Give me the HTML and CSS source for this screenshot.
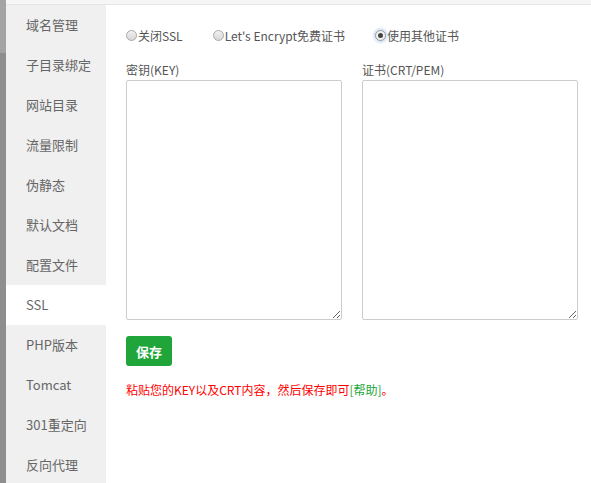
FILE: index.html
```html
<!DOCTYPE html>
<html>
<head>
<meta charset="utf-8">
<link rel="stylesheet" href="styles.css">
</head>
<body>
<div class="page">
  <div class="edge"></div>
  <div class="main">
    <div class="topbar"></div>
    <div class="body">
      <ul class="nav">
        <li>域名管理</li>
        <li>子目录绑定</li>
        <li>网站目录</li>
        <li>流量限制</li>
        <li>伪静态</li>
        <li>默认文档</li>
        <li>配置文件</li>
        <li class="active">SSL</li>
        <li>PHP版本</li>
        <li>Tomcat</li>
        <li>301重定向</li>
        <li>反向代理</li>
      </ul>
      <div class="content">
        <div class="radios">
          <label class="opt"><span class="radio"></span>关闭SSL</label>
          <label class="opt"><span class="radio"></span>Let's Encrypt免费证书</label>
          <label class="opt"><span class="radio checked"></span>使用其他证书</label>
        </div>
        <div class="fields">
          <div class="field">
            <div class="flabel">密钥(KEY)</div>
            <textarea class="ta"></textarea>
          </div>
          <div class="field">
            <div class="flabel">证书(CRT/PEM)</div>
            <textarea class="ta"></textarea>
          </div>
        </div>
        <button class="save">保存</button>
        <p class="tip">粘贴您的KEY以及CRT内容，然后保存即可<a class="help">[帮助]</a>。</p>
      </div>
    </div>
  </div>
</div>
</body>
</html>
```

FILE: styles.css
```css
html, body {
  margin: 0;
  padding: 0;
  height: 100%;
  overflow: hidden;
  background: #fff;
  font-family: "Noto Sans CJK SC", "Liberation Sans", sans-serif;
}
.page {
  display: flex;
  height: 483px;
}
.edge {
  width: 6px;
  flex: none;
  background: linear-gradient(#a3a3a3 0, #a3a3a3 53px, #8e8e8e 53px, #8e8e8e 100%);
}
.main {
  flex: 1;
  display: flex;
  flex-direction: column;
}
.topbar {
  height: 4px;
  background: #f6f6f6;
  border-bottom: 1px solid #e6e6e6;
  flex: none;
}
.body {
  flex: 1;
  display: flex;
}
.nav {
  list-style: none;
  margin: 0;
  padding: 0;
  width: 100px;
  flex: none;
  background: #f0f0f0;
}
.nav li {
  height: 40px;
  line-height: 40px;
  padding-left: 20px;
  font-size: 13px;
  color: #666;
}
.nav li.active {
  background: #fff;
}
.content {
  flex: 1;
  padding: 21px 0 0 20px;
}
.radios {
  display: flex;
  height: 18px;
  align-items: center;
  font-size: 12px;
  color: #555;
}
.opt {
  display: flex;
  align-items: center;
  margin-right: 30px;
}
.radio {
  width: 11px;
  height: 11px;
  border: 1px solid #a9a9a9;
  border-radius: 50%;
  background: linear-gradient(#f2f2f2, #d6d6d6);
  margin-right: 1px;
  box-sizing: border-box;
  position: relative;
}
.radio.checked {
  background: #f3f3f3;
  border-color: #999;
  box-shadow: 0 0 2px 2px #d6e6f7;
}
.radio.checked::after {
  content: "";
  position: absolute;
  left: 2px;
  top: 2px;
  width: 5px;
  height: 5px;
  border-radius: 50%;
  background: #444;
}
.fields {
  display: flex;
  gap: 20px;
  margin-top: 18px;
}
.field {
  display: flex;
  flex-direction: column;
}
.flabel {
  font-size: 12px;
  color: #555;
  line-height: 16px;
  margin-bottom: 2px;
}
.ta {
  width: 216px;
  height: 240px;
  box-sizing: border-box;
  border: 1px solid #ccc;
  border-radius: 2px;
  margin: 0;
  padding: 4px;
  resize: both;
  outline: none;
}
.save {
  display: block;
  margin-top: 16px;
  width: 46px;
  height: 30px;
  border: none;
  border-radius: 3px;
  background: #20a53a;
  color: #fff;
  font-family: "Noto Sans CJK SC", sans-serif;
  font-size: 13px;
  font-weight: bold;
  padding: 0;
}
.tip {
  margin: 16px 0 0;
  font-size: 12px;
  color: #f00;
  line-height: 16px;
}
.help {
  color: #20a53a;
}
```
